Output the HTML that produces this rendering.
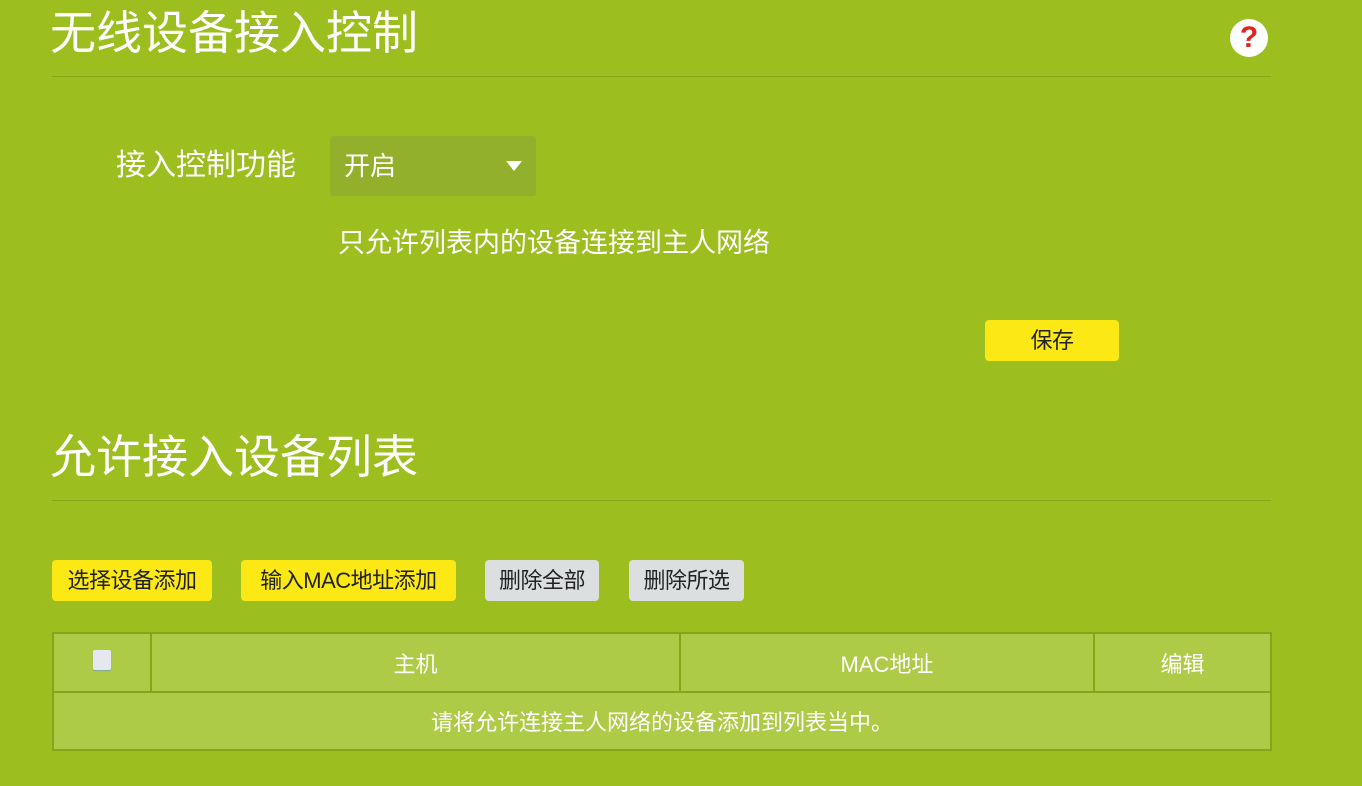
<!DOCTYPE html>
<html><head><meta charset="utf-8"><style>
*{margin:0;padding:0;box-sizing:border-box}
body{width:1362px;height:786px;background:#9cbf1f;font-family:"Liberation Sans","Noto Sans CJK SC",sans-serif;position:relative;overflow:hidden;color:#fff}
.a{position:absolute;white-space:nowrap}
.h{font-size:46px;line-height:1}
.line{position:absolute;left:52px;width:1219px;height:1px;background:#86a61a}
.btn{position:absolute;height:41px;border-radius:4px;font-size:22px;line-height:41px;text-align:center;color:#222;letter-spacing:-0.5px}
.y{background:#fbe815}
.g{background:#dcdfe0}
table{position:absolute;left:52px;top:632px;width:1220px;height:119px;border-collapse:collapse;background:#aecb47}
td{border:2px solid #86a61a;text-align:center;font-size:22px;color:#fff}
</style></head><body>
<div class="a h" style="left:50px;top:10px">无线设备接入控制</div>
<div class="a" style="left:1230px;top:19px;width:38px;height:38px;border-radius:50%;background:#fff;color:#e2231a;font-size:30px;font-weight:bold;line-height:38px;text-align:center">?</div>
<div class="line" style="top:76px"></div>
<div class="a" style="left:116px;top:149px;font-size:30px;line-height:34px">接入控制功能</div>
<div class="a" style="left:330px;top:136px;width:206px;height:60px;background:#93b02c;border-radius:3px"></div>
<div class="a" style="left:344px;top:150px;font-size:26px;line-height:32px">开启</div>
<div class="a" style="left:506px;top:161px;width:0;height:0;border-left:8px solid transparent;border-right:8px solid transparent;border-top:10px solid #fff"></div>
<div class="a" style="left:338px;top:227px;font-size:27px;line-height:32px">只允许列表内的设备连接到主人网络</div>
<div class="btn y" style="left:985px;top:320px;width:134px">保存</div>
<div class="a h" style="left:50px;top:434px">允许接入设备列表</div>
<div class="line" style="top:500px"></div>
<div class="btn y" style="left:52px;top:560px;width:160px">选择设备添加</div>
<div class="btn y" style="left:241px;top:560px;width:215px">输入MAC地址添加</div>
<div class="btn g" style="left:485px;top:560px;width:114px">删除全部</div>
<div class="btn g" style="left:629px;top:560px;width:115px">删除所选</div>
<table>
<tr style="height:59px"><td style="width:98px"><span style="display:inline-block;width:18px;height:20px;background:#e6e8f0;border-radius:2px;box-shadow:0 1px 1px #7a9"></span></td><td style="width:529px">主机</td><td style="width:414px">MAC地址</td><td>编辑</td></tr>
<tr><td colspan="4">请将允许连接主人网络的设备添加到列表当中。</td></tr>
</table>
</body></html>
